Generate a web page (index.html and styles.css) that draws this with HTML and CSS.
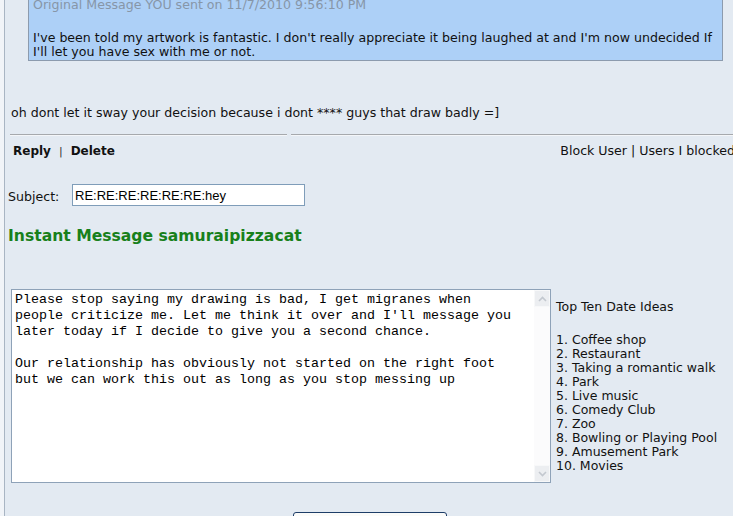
FILE: index.html
```html
<!DOCTYPE html>
<html>
<head>
<meta charset="utf-8">
<title>Message</title>
<link rel="stylesheet" href="styles.css">
</head>
<body>
<div class="page">
  <div class="quote">
    <div class="quote-head">Original Message YOU sent on 11/7/2010 9:56:10 PM</div>
    <div class="quote-body">I've been told my artwork is fantastic. I don't really appreciate it being laughed at and I'm now undecided If<br>I'll let you have sex with me or not.</div>
  </div>
  <p class="reply-text">oh dont let it sway your decision because i dont **** guys that draw badly =]</p>
  <div class="actions">
    <div class="actions-left"><b>Reply</b><span class="sep">|</span><b>Delete</b></div>
    <div class="actions-right">Block User | Users I blocked</div>
  </div>
  <div class="subject-row">
    <label class="subject-label" for="subj">Subject:</label>
    <input id="subj" class="subject" type="text" value="RE:RE:RE:RE:RE:RE:hey">
  </div>
  <h2 class="im-title">Instant Message samuraipizzacat</h2>
  <div class="compose">
    <div class="textbox">
      <textarea class="msg">Please stop saying my drawing is bad, I get migranes when people criticize me. Let me think it over and I'll message you later today if I decide to give you a second chance.

Our relationship has obviously not started on the right foot but we can work this out as long as you stop messing up</textarea>
      <div class="scrollbar">
        <div class="sb-btn"><svg width="9" height="6" viewBox="0 0 9 6"><path d="M1 5 L4.5 1.5 L8 5" fill="none" stroke="#c3c8cf" stroke-width="1.6"/></svg></div>
        <div class="sb-track"></div>
        <div class="sb-btn"><svg width="9" height="6" viewBox="0 0 9 6"><path d="M1 1 L4.5 4.5 L8 1" fill="none" stroke="#c3c8cf" stroke-width="1.6"/></svg></div>
      </div>
    </div>
    <div class="ideas">
      <div class="ideas-title">Top Ten Date Ideas</div>
      <ol class="ideas-list">
        <li>1. Coffee shop</li>
        <li>2. Restaurant</li>
        <li>3. Taking a romantic walk</li>
        <li>4. Park</li>
        <li>5. Live music</li>
        <li>6. Comedy Club</li>
        <li>7. Zoo</li>
        <li>8. Bowling or Playing Pool</li>
        <li>9. Amusement Park</li>
        <li>10. Movies</li>
      </ol>
    </div>
  </div>
  <div class="send-row"><button class="send" type="button" aria-label="Send"></button></div>
</div>
</body>
</html>
```

FILE: styles.css
```css
html, body {
  margin: 0;
  padding: 0;
  height: 100%;
  overflow: hidden;
}
body {
  background: #f1f4f8;
  font-family: "DejaVu Sans", Verdana, sans-serif;
  font-size: 12.6px;
  line-height: 14px;
  color: #111;
}
.page {
  margin-left: 4px;
  border-left: 1px solid #a9b5c3;
  background: #e3eaf2;
  min-height: 100%;
  display: flex;
  flex-direction: column;
}
.quote {
  margin: -2px 10px 0 23px;
  background: #add0f7;
  border: 1px solid #8c9bae;
  border-top: none;
  padding: 0 4px 1px 4px;
  white-space: nowrap;
}
.quote-head {
  color: #8796a8;
}
.quote-body {
  margin-top: 19px;
}
.reply-text {
  margin: 45px 0 0 6px;
}
.actions {
  margin-top: 14px;
  display: flex;
  gap: 4px;
  padding-left: 5px;
}
.actions-left, .actions-right {
  border-top: 1px solid #a6a9ad;
  box-shadow: inset 0 1px 0 #f4f6f9;
  padding-top: 9px;
}
.actions-left {
  width: 274px;
  padding-left: 3px;
  flex: none;
  font-size: 12px;
}
.actions-right {
  flex: 1;
  text-align: right;
  white-space: nowrap;
  overflow: hidden;
  margin-right: -2px;
}
.sep {
  margin: 0 8px;
  font-size: 11px;
  color: #333;
}
.subject-row {
  margin-top: 25px;
  padding-left: 3px;
  display: flex;
  align-items: center;
}
.subject-label {
  width: 64px;
  flex: none;
  position: relative;
  top: 2px;
}
.subject {
  width: 233px;
  height: 22px;
  box-sizing: border-box;
  border: 1px solid #7f9db9;
  background: #fff;
  padding: 0 2px;
  margin: 0;
  font-family: "Liberation Sans", Arial, sans-serif;
  font-size: 13px;
  color: #000;
}
.im-title {
  margin: 21px 0 0 3px;
  font-size: 15.6px;
  line-height: 18px;
  font-weight: bold;
  color: #18801b;
}
.compose {
  margin-top: 44px;
  padding-left: 6px;
  display: flex;
  align-items: flex-start;
}
.textbox {
  width: 540px;
  height: 194px;
  box-sizing: border-box;
  border: 1px solid #8ea2b8;
  background: #fff;
  display: flex;
  flex: none;
}
.msg {
  flex: 1;
  border: none;
  outline: none;
  resize: none;
  margin: 0;
  padding: 2px 10px 0 3px;
  font-family: "Liberation Mono", "Courier New", monospace;
  font-size: 13.33px;
  line-height: 16px;
  color: #000;
  background: #fff;
  overflow: hidden;
}
.scrollbar {
  width: 16px;
  flex: none;
  display: flex;
  flex-direction: column;
  background: #fbfbfc;
}
.sb-btn {
  height: 17px;
  background: #eceef1;
  border: 1px solid #f7f8f9;
  box-sizing: border-box;
  display: flex;
  align-items: center;
  justify-content: center;
}
.sb-track {
  flex: 1;
}
.ideas {
  margin-left: 5px;
  padding-top: 11px;
  font-size: 12.5px;
}
.ideas-list {
  list-style: none;
  margin: 19px 0 0 0;
  padding: 0;
}
.send-row {
  margin-top: 29px;
  padding-left: 288px;
}
.send {
  width: 154px;
  height: 23px;
  border: 1px solid #1d3d68;
  border-radius: 3px;
  background: #fbfbf9;
  padding: 0;
}
```
